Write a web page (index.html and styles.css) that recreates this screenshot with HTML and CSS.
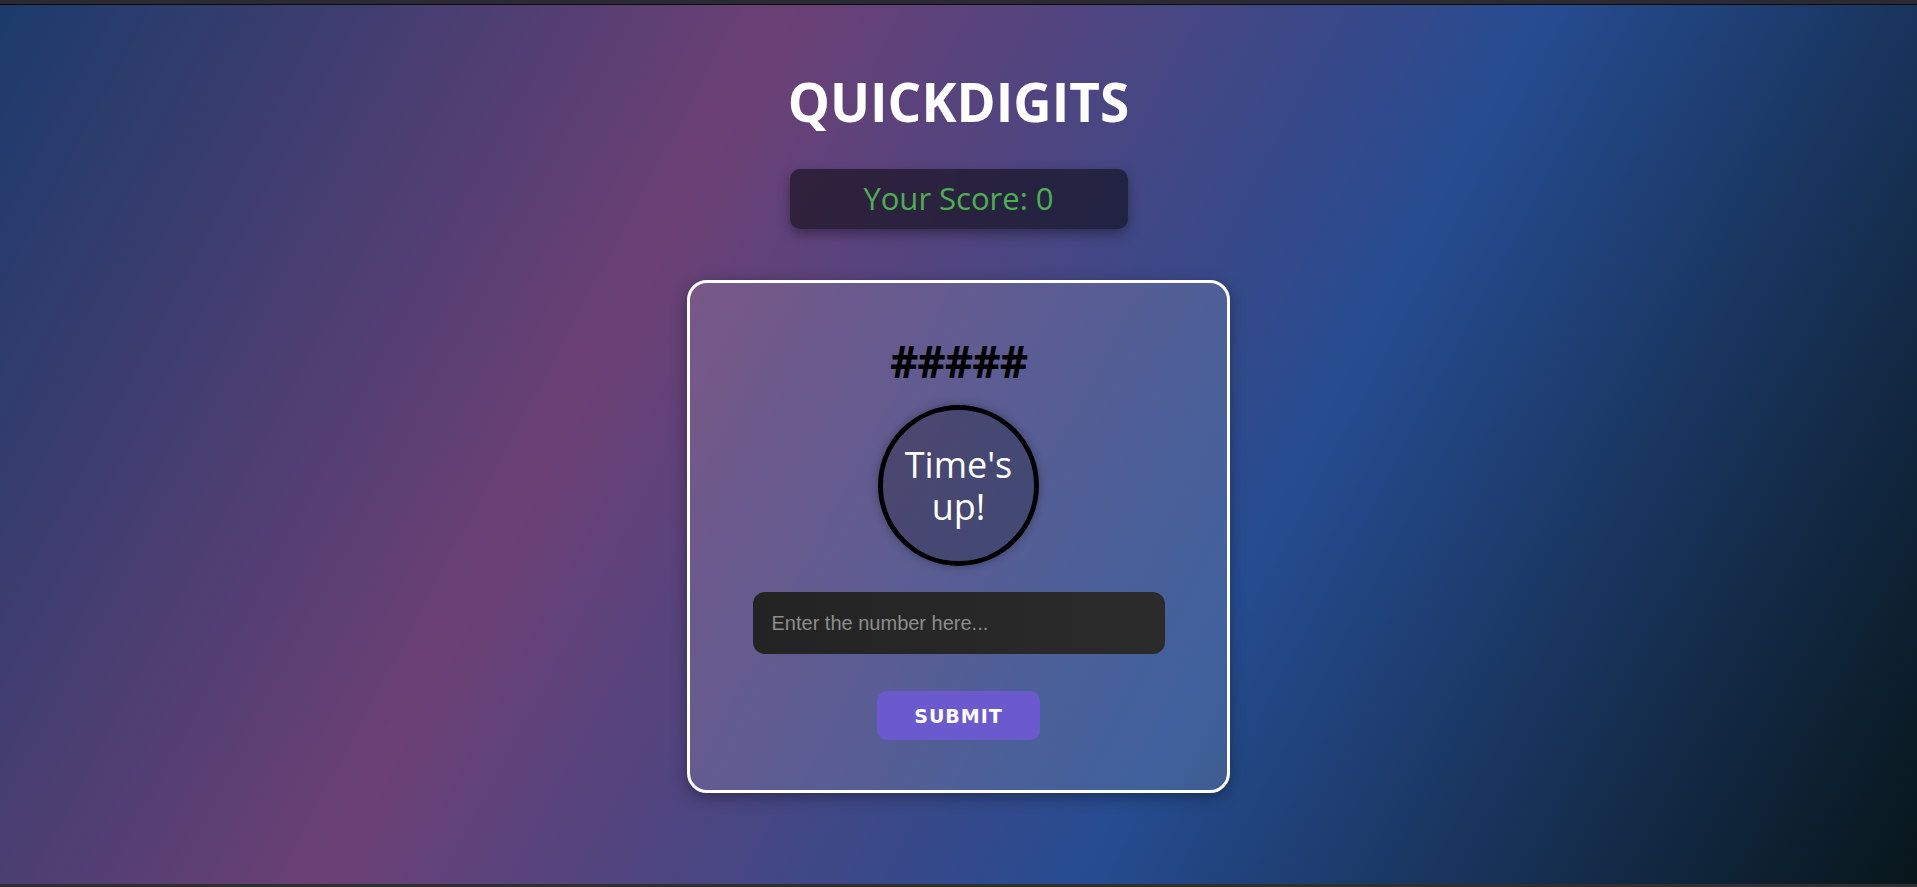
FILE: index.html
```html
<!DOCTYPE html>
<html lang="en">
<head>
<meta charset="UTF-8">
<title>QuickDigits</title>
<link rel="stylesheet" href="styles.css">
</head>
<body>
<div class="topbar"></div>
<main class="page">
  <h1 class="title">QUICKDIGITS</h1>
  <div class="score">Your Score: 0</div>
  <section class="card">
    <h2 class="digits">#####</h2>
    <div class="timer">Time's up!</div>
    <input class="answer" type="text" placeholder="Enter the number here...">
    <button class="submit" type="button">SUBMIT</button>
  </section>
</main>
<div class="bottombar"></div>
</body>
</html>
```
FILE: styles.css
```css
* { box-sizing: border-box; }

html, body {
  margin: 0;
  padding: 0;
  height: 100%;
}

body {
  display: flex;
  flex-direction: column;
  height: 100vh;
  overflow: hidden;
  font-family: "Open Sans", "Noto Sans", sans-serif;
  background: #2b2a33;
}

.topbar {
  height: 5px;
  flex: none;
  background: #2b2a33;
  border-bottom: 1px solid #0c0c10;
}

.bottombar {
  height: 3px;
  flex: none;
  background: #2f2f31;
}

.page {
  flex: 1;
  display: flex;
  flex-direction: column;
  align-items: center;
  background: linear-gradient(118deg, #1b3b6b 0%, #6b4075 33%, #264c90 65%, #07161a 100%);
}

.title {
  margin: 67px 0 0;
  font-family: "Open Sans", sans-serif;
  font-weight: 700;
  font-size: 53px;
  line-height: 60px;
  color: #ffffff;
  letter-spacing: 0;
}

.score {
  margin-top: 37px;
  width: 338px;
  padding: 9px 0 11px;
  text-align: center;
  font-size: 31px;
  line-height: 40px;
  color: #4caf50;
  background: rgba(0, 0, 0, 0.5);
  border-radius: 10px;
  box-shadow: 0 5px 12px rgba(0, 0, 0, 0.35);
}

.card {
  margin-top: 51px;
  width: 543px;
  padding: 52px 0 50px;
  display: flex;
  flex-direction: column;
  align-items: center;
  border: 3px solid #ffffff;
  border-radius: 20px;
  background: rgba(255, 255, 255, 0.12);
  box-shadow: 0 4px 15px rgba(0, 0, 0, 0.35);
}

.digits {
  margin: 0;
  font-family: "Open Sans", sans-serif;
  font-weight: 700;
  font-size: 44px;
  line-height: 52px;
  letter-spacing: -1px;
  color: #000000;
}

.timer {
  margin-top: 18px;
  width: 161px;
  height: 161px;
  border: 5px solid #000000;
  border-radius: 50%;
  display: flex;
  align-items: center;
  justify-content: center;
  text-align: center;
  font-size: 36px;
  line-height: 42px;
  color: #ffffff;
  background: rgba(0, 0, 0, 0.22);
  box-shadow: 0 0 10px rgba(0, 0, 0, 0.3);
  padding: 0 16px;
}

.answer {
  margin-top: 26px;
  width: 412px;
  height: 62px;
  padding: 0 19px;
  border: none;
  outline: none;
  border-radius: 12px;
  background: linear-gradient(90deg, #232323, #2b2b2b);
  font-family: "Liberation Sans", Arial, sans-serif;
  font-size: 20px;
  color: #dddddd;
}

.answer::placeholder {
  color: #8d8d8d;
}

.submit {
  margin-top: 37px;
  width: 163px;
  height: 49px;
  border: none;
  border-radius: 10px;
  background: #6a5acd;
  color: #ffffff;
  font-family: "DejaVu Sans", Verdana, sans-serif;
  font-weight: 700;
  font-size: 19px;
  letter-spacing: 1px;
  cursor: pointer;
}
```
